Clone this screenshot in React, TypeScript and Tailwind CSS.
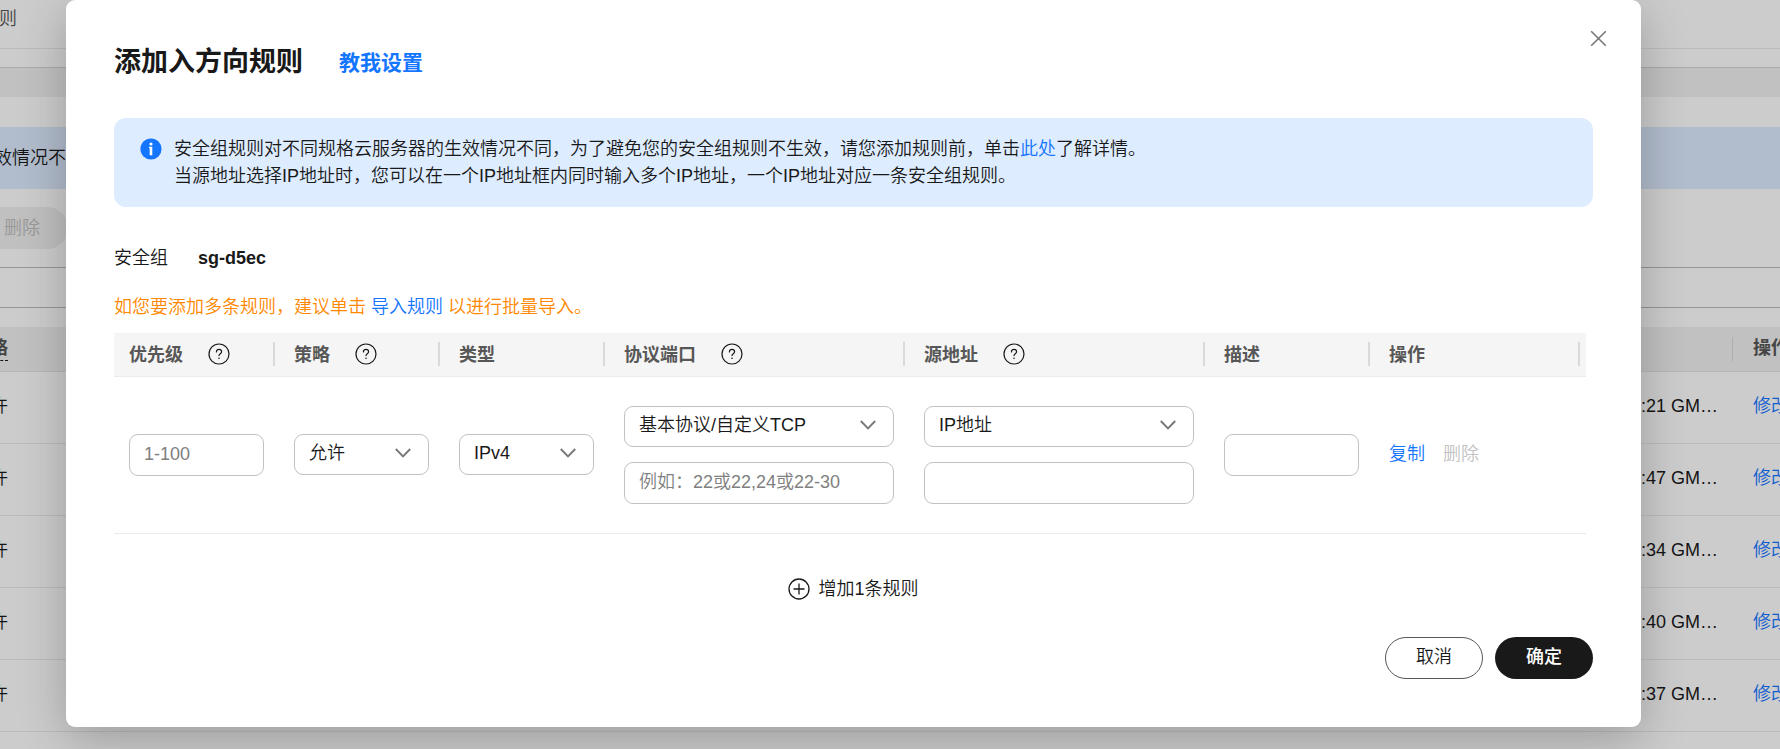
import type { ReactNode } from "react";

type Option = { id: string; label: string; value: string };

const field =
  "w-full rounded-[9px] border border-[#c2c2c2] bg-white px-[14px] text-[18px] text-[#191919] outline-none placeholder:text-[#808080]";

function HelpIcon() {
  return (
    <svg viewBox="0 0 22 22" className="size-[22px] shrink-0" fill="none" stroke="#191919" aria-hidden="true">
      <circle cx="11" cy="11" r="10" strokeWidth="1.2" />
      <path
        d="M8.4 8.9c0-1.6 1.1-2.6 2.6-2.6s2.6 1 2.6 2.4c0 1.9-2.6 2.1-2.6 3.9"
        strokeWidth="1.2"
        strokeLinecap="round"
      />
      <circle cx="11" cy="15.2" r=".8" fill="#191919" stroke="none" />
    </svg>
  );
}

function InfoIcon() {
  return (
    <svg viewBox="0 0 22 22" className="size-[22px] shrink-0" aria-hidden="true">
      <circle cx="11" cy="11" r="10.6" fill="#1476ff" />
      <circle cx="11" cy="6" r="1.6" fill="#fff" />
      <path d="M9 8.8h3.3v8.4h-2.6v-7h-.7z" fill="#fff" />
    </svg>
  );
}

function PlusIcon() {
  return (
    <svg viewBox="0 0 22 22" className="size-[22px] shrink-0" fill="none" stroke="#191919" aria-hidden="true">
      <circle cx="11" cy="11" r="10" strokeWidth="1.3" />
      <path d="M11 5.5v11M5.5 11h11" strokeWidth="1.3" />
    </svg>
  );
}

function SelectField({ id, label, value }: Option) {
  return (
    <div className="relative">
      <label htmlFor={id} className="sr-only">
        {label}
      </label>
      <select id={id} className={`${field} block h-[41px] appearance-none pb-[2px]`}>
        <option>{value}</option>
      </select>
      <svg
        viewBox="0 0 16 10"
        className="pointer-events-none absolute top-[14px] right-[18px] h-[10px] w-[16px]"
        fill="none"
        stroke="#777"
        strokeWidth="1.9"
        aria-hidden="true"
      >
        <path d="M.8 1 8 8.4 15.2 1" />
      </svg>
    </div>
  );
}

function InputField({ id, label, value }: Option) {
  return (
    <>
      <label htmlFor={id} className="sr-only">
        {label}
      </label>
      <input id={id} placeholder={value} className={`${field} block h-[42px] pb-px`} />
    </>
  );
}

const columns = [
  { title: "优先级", help: true, width: "w-[165px]", end: "pr-1" },
  { title: "策略", help: true, width: "w-[165px]", end: "pr-1" },
  { title: "类型", help: false, width: "w-[165px]", end: "pr-1" },
  { title: "协议端口", help: true, width: "w-[300px]", end: "pr-1" },
  { title: "源地址", help: true, width: "w-[300px]", end: "pr-1" },
  { title: "描述", help: false, width: "w-[165px]", end: "pr-1" },
  { title: "操作", help: false, width: "w-auto", end: "pr-[6px]" },
];

function Cell({ children }: { children: ReactNode }) {
  return <td className="px-[15px] py-[29px] align-middle">{children}</td>;
}

function RulesTable() {
  return (
    <table className="w-full table-fixed border-collapse text-left">
      <thead>
        <tr className="h-[43px] border-b border-[#ebebeb] bg-[#f5f5f5]">
          {columns.map((column) => (
            <th key={column.title} scope="col" className={`${column.width} p-0 font-bold text-[#575757]`}>
              <div className={`flex items-center justify-between pl-[15px] ${column.end}`}>
                <span className="flex items-center gap-[25px] whitespace-nowrap">
                  <span className="pt-[2px]">{column.title}</span>
                  {column.help && <HelpIcon />}
                </span>
                <span className="h-6 w-[2px] bg-[#dadada]" />
              </div>
            </th>
          ))}
        </tr>
      </thead>
      <tbody>
        <tr className="border-b border-[#ebebeb]">
          <Cell>
            <InputField id="priority" label="优先级" value="1-100" />
          </Cell>
          <Cell>
            <SelectField id="action" label="策略" value="允许" />
          </Cell>
          <Cell>
            <SelectField id="type" label="类型" value="IPv4" />
          </Cell>
          <Cell>
            <div className="flex flex-col gap-[15px]">
              <SelectField id="protocol" label="协议" value="基本协议/自定义TCP" />
              <div>
                <InputField id="port" label="端口" value="例如：22或22,24或22-30" />
              </div>
            </div>
          </Cell>
          <Cell>
            <div className="flex flex-col gap-[15px]">
              <SelectField id="source" label="源地址" value="IP地址" />
              <div>
                <InputField id="address" label="地址" value="" />
              </div>
            </div>
          </Cell>
          <Cell>
            <InputField id="description" label="描述" value="" />
          </Cell>
          <Cell>
            <div className="flex gap-[18px]">
              <button type="button" className="text-[#1476ff]">
                复制
              </button>
              <button type="button" disabled className="text-[#c2c2c2]">
                删除
              </button>
            </div>
          </Cell>
        </tr>
      </tbody>
    </table>
  );
}

const times = [":21 GM…", ":47 GM…", ":34 GM…", ":40 GM…", ":37 GM…"];

function PageBehind() {
  return (
    <main className="min-h-screen bg-white">
      <header className="h-[49px] border-b border-[#ececec] pt-[6px] text-[#575757]">
        <span className="-ml-[19px]">规则</span>
      </header>
      <div className="h-[19px] border-b border-[#d6d6d6]" />
      <div className="h-[29px] bg-[#f2f2f2]" />
      <div className="mt-[30px] flex h-[62px] items-center bg-[#deecff]">
        <span className="-ml-[6px]">效情况不</span>
      </div>
      <div className="mt-[18px] flex">
        <button
          type="button"
          disabled
          className="h-[42px] rounded-r-full bg-[#f0f0f0] pr-7 pl-1 text-[#bfbfbf]"
        >
          删除
        </button>
      </div>
      <div className="mt-[18px] h-[41px] border-y border-[#bdbdbd]" />
      <table className="mt-[19px] w-full table-fixed border-collapse text-left">
        <thead>
          <tr className="h-[44px] border-b border-[#e6e6e6] bg-[#f2f2f2] text-[#575757]">
            <th className="p-0 font-bold">
              <span className="-ml-[28px] border-b border-dashed border-[#191919] pb-[2px]">策略</span>
            </th>
            <th className="w-[62px] p-0 font-bold whitespace-nowrap">
              <div className="mr-[-20px] ml-[14px] flex items-center gap-5">
                <span className="h-6 w-px bg-[#dadada]" />
                操作
              </div>
            </th>
          </tr>
        </thead>
        <tbody>
          {times.map((time) => (
            <tr key={time} className="h-[72px] border-b border-[#ececec]">
              <td className="p-0 pb-[2px]">
                <div className="-ml-[28px] flex justify-between">
                  <span>允许</span>
                  <span>{time}</span>
                </div>
              </td>
              <td className="p-0 pb-[2px] pl-[35px] whitespace-nowrap">
                <a href="#edit" className="text-[#1476ff]">
                  修改
                </a>
              </td>
            </tr>
          ))}
        </tbody>
      </table>
    </main>
  );
}

export default function App() {
  return (
    <div
      lang="zh-CN"
      className="relative h-screen overflow-hidden font-['Liberation_Sans','Noto_Sans_CJK_SC',sans-serif] text-[18px] leading-[27px] font-[350] text-[#191919]"
    >
      <PageBehind />
      <div className="absolute inset-0 flex items-start bg-black/20 pr-[139px] pl-[66px]">
        <section
          role="dialog"
          aria-modal="true"
          aria-labelledby="dialog-title"
          className="relative w-full rounded-[9px] bg-white px-12 pt-[43px] pb-12 shadow-[0_12px_48px_rgba(0,0,0,0.24)]"
        >
          <button type="button" aria-label="关闭" className="absolute top-[30px] right-[34px] p-0">
            <svg viewBox="0 0 17 17" className="size-[17px]" stroke="#777" strokeWidth="1.6" aria-hidden="true">
              <path d="M1.2 1.2l14.6 14.6M15.8 1.2 1.2 15.8" />
            </svg>
          </button>

          <div className="flex h-10 items-center gap-9 leading-10 font-bold">
            <h1 id="dialog-title" className="pb-[2px] text-[27px]">
              添加入方向规则
            </h1>
            <a href="#guide" className="text-[21px] text-[#1476ff]">
              教我设置
            </a>
          </div>

          <div className="mt-[35px] flex gap-3 rounded-xl bg-[#deecff] pt-[18px] pb-[17px] pr-6 pl-[26px]">
            <div className="pt-[2px]">
              <InfoIcon />
            </div>
            <div>
              <p>
                安全组规则对不同规格云服务器的生效情况不同，为了避免您的安全组规则不生效，请您添加规则前，单击
                <a href="#details" className="text-[#1476ff]">
                  此处
                </a>
                了解详情。
              </p>
              <p>当源地址选择IP地址时，您可以在一个IP地址框内同时输入多个IP地址，一个IP地址对应一条安全组规则。</p>
            </div>
          </div>

          <div className="mt-[38px] flex gap-[30px]">
            <span>安全组</span>
            <strong className="font-bold">sg-d5ec</strong>
          </div>

          <p className="mt-[22px] mb-3 text-[#ff8800]">
            如您要添加多条规则，建议单击{" "}
            <a href="#import" className="text-[#1476ff]">
              导入规则
            </a>{" "}
            以进行批量导入。
          </p>

          <div className="pr-[7px]">
            <RulesTable />
          </div>

          <div className="mt-[42px] flex justify-center">
            <button type="button" className="flex items-center gap-2">
              <PlusIcon />
              增加1条规则
            </button>
          </div>

          <div className="mt-[34px] flex justify-end gap-3">
            <button type="button" className="h-[42px] w-[98px] rounded-full border border-[#575757] pb-px">
              取消
            </button>
            <button type="button" className="h-[42px] w-[98px] rounded-full bg-[#191919] pb-px font-medium text-white">
              确定
            </button>
          </div>
        </section>
      </div>
    </div>
  );
}
